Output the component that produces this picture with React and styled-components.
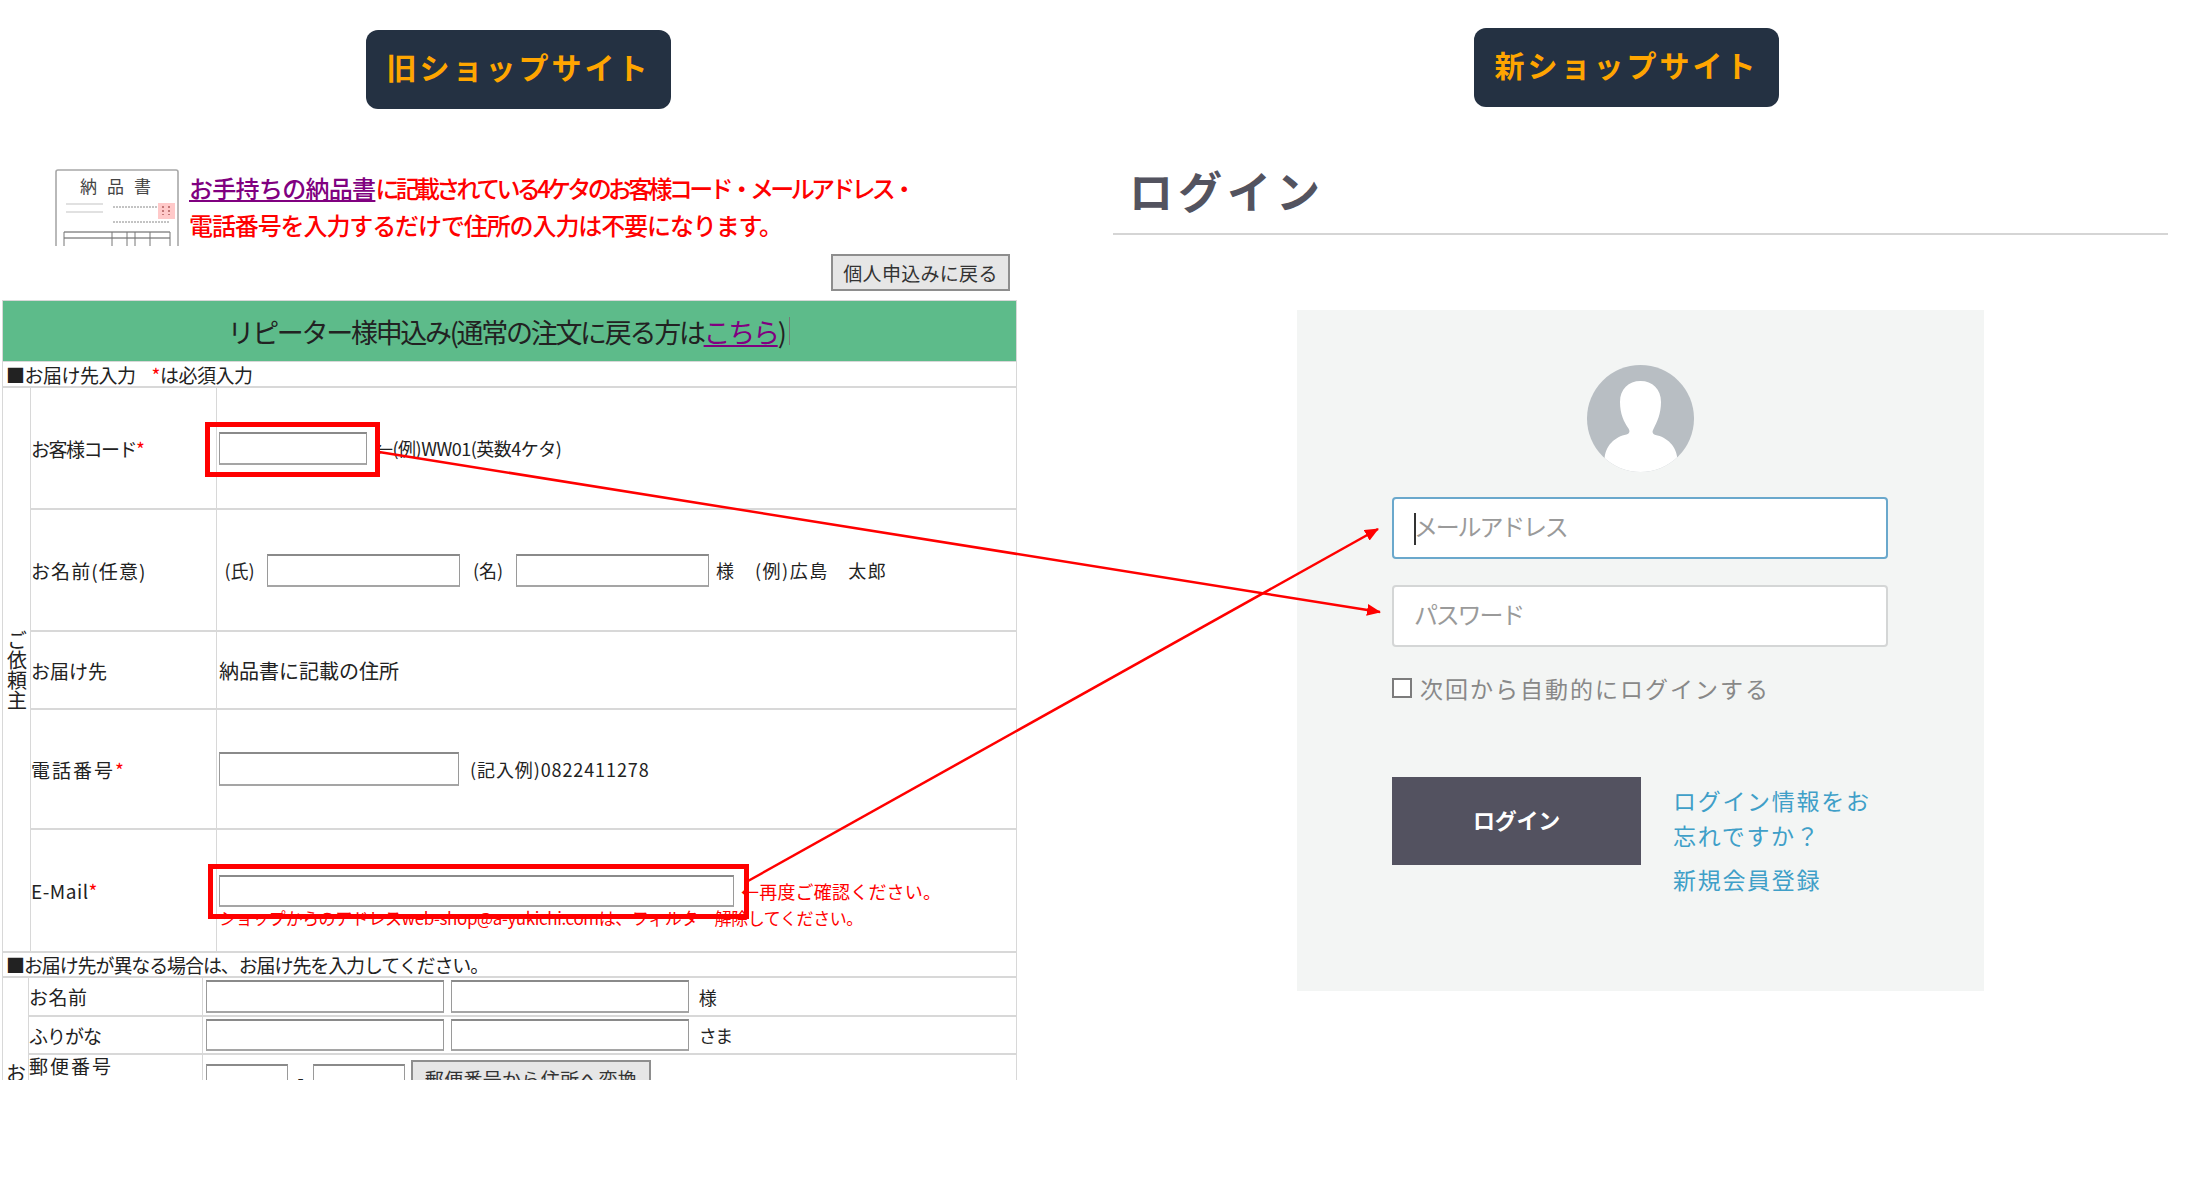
import React from "react";
import styled, { createGlobalStyle } from "styled-components";

const GlobalStyle = createGlobalStyle`
  html, body {
    margin: 0;
    padding: 0;
    background: #fff;
  }
  body {
    font-family: "Noto Sans CJK JP", "Noto Sans", sans-serif;
  }
`;

const Page = styled.div`
  position: relative;
  width: 2200px;
  height: 1200px;
  display: flex;
  overflow: hidden;
`;

const OldSite = styled.div`
  width: 1015px;
  height: 1080px;
  margin-left: 2px;
  overflow: hidden;
  flex-shrink: 0;
`;

const NewSite = styled.div`
  width: 1055px;
  margin-left: 96px;
  padding-top: 28px;
`;

const Badge = styled.div`
  width: 305px;
  height: 79px;
  margin-left: ${(props) => props.$left}px;
  margin-top: ${(props) => props.$top || 0}px;
  padding-bottom: 7px;
  box-sizing: border-box;
  border-radius: 12px;
  background: #243142;
  color: #ffa500;
  font-size: 30px;
  font-weight: 700;
  letter-spacing: 3px;
  display: flex;
  align-items: center;
  justify-content: center;
`;

const Notice = styled.div`
  display: flex;
  gap: 10px;
  margin: 60px 0 0 53px;
  height: 77px;
`;

const NoticeText = styled.div`
  color: #f00;
  font-size: 24px;
  font-weight: 500;
  line-height: 37px;
  white-space: nowrap;
`;

const NoticeLine = styled.span`
  letter-spacing: ${(props) => props.$spacing}px;
`;

const VisitedLink = styled.a`
  color: #800080;
  text-decoration: underline;
  letter-spacing: ${(props) => (props.$spacing !== undefined ? `${props.$spacing}px` : "inherit")};
`;

const BackRow = styled.div`
  display: flex;
  justify-content: flex-end;
  margin-top: 8px;
  padding-right: 7px;
`;

const OldButton = styled.div`
  width: ${(props) => props.$width}px;
  height: ${(props) => props.$height}px;
  margin-top: ${(props) => props.$offset || 0}px;
  box-sizing: border-box;
  border: 2px solid #8e8e8e;
  background: #e6e6e6;
  color: #333;
  font-size: 19px;
  letter-spacing: 0.3px;
  display: flex;
  align-items: center;
  justify-content: center;
  white-space: nowrap;
  flex-shrink: 0;
`;

const GreenHeader = styled.div`
  height: 62px;
  margin-top: 9px;
  box-sizing: border-box;
  border: 1px solid #d8d8d8;
  background: #5dbb8a;
  color: #222;
  font-size: 27px;
  letter-spacing: -2.3px;
  display: flex;
  align-items: center;
  justify-content: center;
  padding-right: 2px;
  white-space: nowrap;
`;

const CursorMark = styled.span`
  display: inline-block;
  width: 1px;
  height: 28px;
  margin-left: 4px;
  background: #777;
`;

const SectionLine = styled.div`
  height: ${(props) => props.$height}px;
  box-sizing: border-box;
  border-left: 1px solid #d8d8d8;
  border-right: 1px solid #d8d8d8;
  padding-left: 3px;
  font-size: 19px;
  letter-spacing: ${(props) => props.$spacing}px;
  color: #222;
  display: flex;
  align-items: center;
  white-space: nowrap;
`;

const Required = styled.span`
  color: #f00;
  margin-left: ${(props) => props.$left || 0}px;
`;

const OldTable = styled.table`
  width: 100%;
  table-layout: fixed;
  border-collapse: collapse;
  border-top: 2px solid #d8d8d8;
  border-bottom: 2px solid #d8d8d8;
`;

const Row = styled.tr`
  height: ${(props) => props.$height}px;
`;

const SideCell = styled.td`
  width: ${(props) => props.$width}px;
  padding: ${(props) => props.$top || 0}px 0 0;
  border: 1px solid #d8d8d8;
  font-size: 20px;
  color: #222;
  vertical-align: ${(props) => (props.$top ? "top" : "middle")};
`;

const SideText = styled.div`
  writing-mode: vertical-rl;
  margin: 0 auto;
  line-height: 22px;
`;

const LabelCell = styled.td`
  width: ${(props) => props.$width}px;
  padding: 0;
  border: 1px solid #d8d8d8;
  border-bottom-width: 2px;
  font-size: 19px;
  line-height: ${(props) => props.$lineHeight || "normal"};
  letter-spacing: ${(props) => props.$spacing ?? -1.5}px;
  color: #222;
  white-space: nowrap;
  vertical-align: ${(props) => props.$align || "middle"};
`;

const ValueCell = styled.td`
  padding: ${(props) => props.$paddingTop || 0}px 0 0 ${(props) => props.$left ?? 2}px;
  border: 1px solid #d8d8d8;
  border-bottom-width: 2px;
  color: #222;
  white-space: nowrap;
  vertical-align: ${(props) => props.$align || "middle"};
`;

const Inline = styled.div`
  display: flex;
  align-items: ${(props) => props.$align || "center"};
  gap: ${(props) => props.$gap || 0}px;
`;

const Hint = styled.span`
  display: inline-block;
  min-width: ${(props) => props.$width || 0}px;
  margin-top: ${(props) => props.$offset || 0}px;
  font-size: ${(props) => props.$size || 18}px;
  letter-spacing: ${(props) => props.$spacing ?? -1.4}px;
  text-align: ${(props) => (props.$center ? "center" : "left")};
`;

const OldInput = styled.div`
  width: ${(props) => props.$width}px;
  height: ${(props) => props.$height || 33}px;
  margin-top: ${(props) => props.$offset || 0}px;
  box-sizing: border-box;
  border: 1px solid #9a9a9a;
  border-top: 2px solid #8a8a8a;
  border-bottom: 2px solid #a5a5a5;
  background: #fff;
  flex-shrink: 0;
`;

const RedNote = styled.div`
  color: #f00;
  font-size: ${(props) => props.$size || 18}px;
  letter-spacing: ${(props) => props.$spacing}px;
  line-height: 22px;
`;

const BlueNote = styled.div`
  margin-top: 6px;
  color: #1a5fd0;
  font-size: 14px;
  line-height: 14px;
`;

const Title = styled.h1`
  margin: 0;
  height: 128px;
  box-sizing: border-box;
  padding: 55px 0 0 16px;
  border-bottom: 2px solid #d5d5d5;
  color: #53535f;
  font-size: 44px;
  font-weight: 700;
  line-height: 56px;
  letter-spacing: 5px;
`;

const LoginPanel = styled.div`
  width: 687px;
  height: 681px;
  margin: 75px 0 0 184px;
  box-sizing: border-box;
  padding: 55px 96px 0 95px;
  background: #f3f5f4;
`;

const AvatarWrap = styled.div`
  display: flex;
  justify-content: center;
  margin-bottom: 25px;
`;

const FieldWrap = styled.div`
  position: relative;
  margin-bottom: 26px;
`;

const Field = styled.input`
  display: block;
  width: 100%;
  height: 62px;
  box-sizing: border-box;
  padding: 0 0 6px 20px;
  border: 2px solid ${(props) => (props.$focused ? "#6aa8cc" : "#d4d6d6")};
  border-radius: 4px;
  background: #fff;
  outline: none;
  font-family: "Noto Sans CJK JP", sans-serif;
  font-size: 24px;
  letter-spacing: -2.2px;

  &::placeholder {
    color: #9a9a9a;
    opacity: 1;
  }
`;

const Caret = styled.span`
  position: absolute;
  left: 22px;
  top: 16px;
  width: 2px;
  height: 32px;
  background: #333;
`;

const RememberRow = styled.div`
  display: flex;
  align-items: center;
  gap: 8px;
  margin-top: 31px;
  height: 20px;
  color: #888;
  font-size: 23px;
  letter-spacing: 2px;
  white-space: nowrap;
`;

const CheckBox = styled.span`
  width: 20px;
  height: 20px;
  box-sizing: border-box;
  border: 2px solid #7c7c7c;
  background: #fff;
  flex-shrink: 0;
`;

const ActionRow = styled.div`
  display: flex;
  gap: 32px;
  margin-top: 79px;
`;

const LoginButton = styled.div`
  width: 249px;
  height: 88px;
  padding-bottom: 4px;
  box-sizing: border-box;
  background: #535260;
  color: #fff;
  font-size: 22px;
  font-weight: 700;
  letter-spacing: -0.2px;
  display: flex;
  align-items: center;
  justify-content: center;
  flex-shrink: 0;
`;

const LinkList = styled.div`
  display: flex;
  flex-direction: column;
  gap: 9px;
  padding-top: 6px;
`;

const HelpLink = styled.a`
  color: #3f9fc8;
  font-size: 23px;
  line-height: 35px;
  letter-spacing: 1.7px;
  width: 200px;
`;

const Annotations = styled.svg`
  position: absolute;
  left: 0;
  top: 0;
  pointer-events: none;
`;

const Receipt = () => (
  <svg width="124" height="77" viewBox="0 0 124 77">
    <path d="M1 77V3q0-2 2-2h118q2 0 2 2v74" fill="none" stroke="#a8a8a8" strokeWidth="1.6" />
    <text x="25" y="24" fontSize="17" fill="#444" letterSpacing="10" fontFamily="Noto Sans CJK JP">
      納品書
    </text>
    <path d="M11 35h37M11 43h37" stroke="#c4c4c4" strokeWidth="1.2" />
    <path d="M58 38h57M58 53h57" stroke="#888" strokeWidth="1" strokeDasharray="2 1" />
    <rect x="103" y="34" width="17" height="16" fill="#ffc9c9" />
    <path d="M108 37v9M114 37v9" stroke="#a55" strokeWidth="1.4" strokeDasharray="2 2" />
    <path d="M9 63h106M9 69h106" stroke="#555" strokeWidth="1" />
    <path d="M9 63v14M57 63v14M72 63v14M80 63v14M95 63v14M115 63v14" stroke="#777" strokeWidth="1" />
  </svg>
);

const Avatar = () => (
  <svg width="107" height="107" viewBox="0 0 107 107">
    <defs>
      <clipPath id="avatarClip">
        <circle cx="53.5" cy="53.5" r="53.5" />
      </clipPath>
    </defs>
    <g clipPath="url(#avatarClip)">
      <rect width="107" height="107" fill="#b8bec3" />
      <path
        d="M53.5 16c-12 0-20.500 8-20.500 21 0 12 4 20 8.500 26.500 1.800 2.700 1 5-2 6-11 2-22 11-22 26v12h73V96c0-15-11-24-22-26-3-1-3.800-3.300-2-6C70 57 74 49 74 37c0-13-8.500-21-20.500-21z"
        fill="#fff"
      />
    </g>
  </svg>
);

const App = () => {
  return (
    <Page>
      <GlobalStyle />
      <OldSite>
        <Badge $left={364} $top={30}>旧ショップサイト</Badge>
        <Notice>
          <Receipt />
          <NoticeText>
            <VisitedLink $spacing={-0.7}>お手持ちの納品書</VisitedLink>
            <NoticeLine $spacing={-3.7}>に記載されている4ケタのお客様コード・メールアドレス・</NoticeLine>
            <br />
            <NoticeLine $spacing={-1.1}>電話番号を入力するだけで住所の入力は不要になります。</NoticeLine>
          </NoticeText>
        </Notice>
        <BackRow>
          <OldButton $width={179} $height={37}>個人申込みに戻る</OldButton>
        </BackRow>
        <GreenHeader>
          リピーター様申込み(通常の注文に戻る方は<VisitedLink>こちら</VisitedLink>)<CursorMark />
        </GreenHeader>
        <SectionLine $height={24} $spacing={-0.5}>
          ■お届け先入力<Required $left={16}>*</Required>は必須入力
        </SectionLine>
        <OldTable>
          <tbody>
            <Row $height={122}>
              <SideCell $width={27} rowSpan={5}>
                <SideText>ご依頼主</SideText>
              </SideCell>
              <LabelCell $width={185}>
                お客様コード<Required>*</Required>
              </LabelCell>
              <ValueCell>
                <Inline $gap={8}>
                  <OldInput $width={148} />
                  <Hint $spacing={-0.5}>←(例)WW01(英数4ケタ)</Hint>
                </Inline>
              </ValueCell>
            </Row>
            <Row $height={122}>
              <LabelCell $spacing={1.1}>お名前(任意)</LabelCell>
              <ValueCell>
                <Inline $gap={7}>
                  <Hint $width={41} $spacing={0} $center>(氏)</Hint>
                  <OldInput $width={193} />
                  <Hint $width={42} $spacing={0} $center>(名)</Hint>
                  <OldInput $width={193} />
                  <Hint $spacing={1.5}>様　(例)広島　太郎</Hint>
                </Inline>
              </ValueCell>
            </Row>
            <Row $height={78}>
              <LabelCell $spacing={0}>お届け先</LabelCell>
              <ValueCell>
                <Hint $size={20} $spacing={0}>納品書に記載の住所</Hint>
              </ValueCell>
            </Row>
            <Row $height={120}>
              <LabelCell $spacing={2}>
                電話番号<Required>*</Required>
              </LabelCell>
              <ValueCell>
                <Inline $gap={11}>
                  <OldInput $width={240} $height={34} />
                  <Hint $spacing={0.9}>(記入例)0822411278</Hint>
                </Inline>
              </ValueCell>
            </Row>
            <Row $height={123}>
              <LabelCell $spacing={0.5}>
                E-Mail<Required>*</Required>
              </LabelCell>
              <ValueCell $paddingTop={22}>
                <Inline $gap={7}>
                  <OldInput $width={515} $height={32} />
                  <RedNote $spacing={0.2}>←再度ご確認ください。</RedNote>
                </Inline>
                <RedNote $size={17} $spacing={-0.4}>
                  ショップからのアドレスweb-shop@a-yukichi.comは、フィルター解除してください。
                </RedNote>
              </ValueCell>
            </Row>
          </tbody>
        </OldTable>
        <SectionLine $height={23} $spacing={-1.1}>■お届け先が異なる場合は、お届け先を入力してください。</SectionLine>
        <OldTable>
          <tbody>
            <Row $height={39}>
              <SideCell $width={25} rowSpan={3} $top={85}>
                <SideText>お届け先</SideText>
              </SideCell>
              <LabelCell $width={173} $spacing={0.5}>お名前</LabelCell>
              <ValueCell $left={3}>
                <Inline $gap={7}>
                  <OldInput $width={238} />
                  <OldInput $width={238} />
                  <Hint>&nbsp;様</Hint>
                </Inline>
              </ValueCell>
            </Row>
            <Row $height={38}>
              <LabelCell $spacing={-1}>ふりがな</LabelCell>
              <ValueCell $left={3}>
                <Inline $gap={7}>
                  <OldInput $width={238} $height={32} />
                  <OldInput $width={238} $height={32} />
                  <Hint>&nbsp;さま</Hint>
                </Inline>
              </ValueCell>
            </Row>
            <Row $height={110}>
              <LabelCell $align="top" $spacing={2} $lineHeight="22px">
                郵便番号
                <BlueNote>郵便番号検索</BlueNote>
              </LabelCell>
              <ValueCell $left={3} $align="top">
                <Inline $gap={6} $align="flex-start">
                  <OldInput $width={82} $offset={9} />
                  <Hint $width={13} $spacing={0} $center $offset={9}>-</Hint>
                  <OldInput $width={92} $offset={9} />
                  <OldButton $width={240} $height={36} $offset={5}>郵便番号から住所へ変換</OldButton>
                </Inline>
              </ValueCell>
            </Row>
          </tbody>
        </OldTable>
      </OldSite>

      <NewSite>
        <Badge $left={361}>新ショップサイト</Badge>
        <Title>ログイン</Title>
        <LoginPanel>
          <AvatarWrap>
            <Avatar />
          </AvatarWrap>
          <FieldWrap>
            <Field $focused placeholder="メールアドレス" />
            <Caret />
          </FieldWrap>
          <FieldWrap>
            <Field placeholder="パスワード" />
          </FieldWrap>
          <RememberRow>
            <CheckBox />
            次回から自動的にログインする
          </RememberRow>
          <ActionRow>
            <LoginButton>ログイン</LoginButton>
            <LinkList>
              <HelpLink>ログイン情報をお忘れですか？</HelpLink>
              <HelpLink>新規会員登録</HelpLink>
            </LinkList>
          </ActionRow>
        </LoginPanel>
      </NewSite>

      <Annotations width="2200" height="1200" viewBox="0 0 2200 1200">
        <defs>
          <marker id="redHead" markerWidth="14" markerHeight="12" refX="13" refY="6" orient="auto" markerUnits="userSpaceOnUse">
            <path d="M0 0L14 6L0 12z" fill="#f00" />
          </marker>
        </defs>
        <rect x="207.500" y="424.500" width="170" height="50" fill="none" stroke="#f00" strokeWidth="5" />
        <rect x="210.500" y="866.500" width="536" height="50" fill="none" stroke="#f00" strokeWidth="5" />
        <line x1="379" y1="452" x2="1380" y2="612" stroke="#f00" strokeWidth="2.500" markerEnd="url(#redHead)" />
        <line x1="748" y1="881" x2="1378" y2="529" stroke="#f00" strokeWidth="2.500" markerEnd="url(#redHead)" />
      </Annotations>
    </Page>
  );
};

export default App;
